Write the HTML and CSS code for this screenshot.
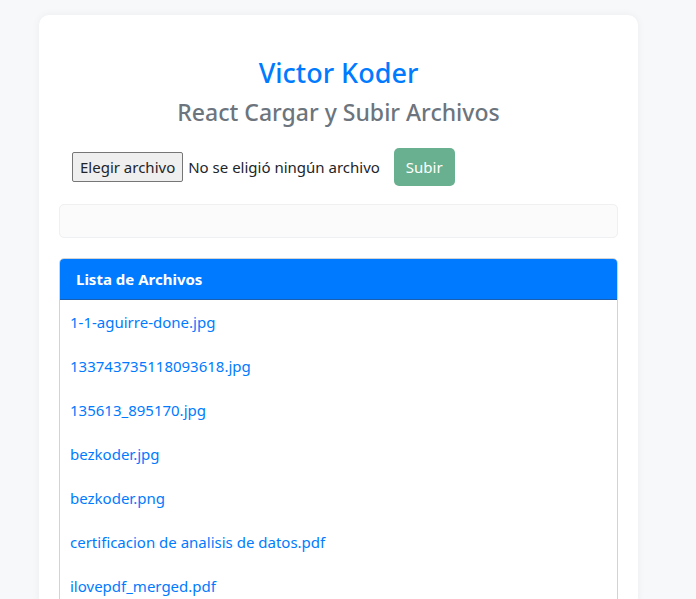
FILE: index.html
```html
<!DOCTYPE html>
<html lang="es">
<head>
<meta charset="utf-8">
<title>React Cargar y Subir Archivos</title>
<link rel="stylesheet" href="styles.css">
</head>
<body>
<div class="page">
  <div class="panel">
    <h2 class="brand">Victor Koder</h2>
    <h3 class="subtitle">React Cargar y Subir Archivos</h3>
    <div class="upload-row">
      <label class="file-picker">
        <span class="file-btn">Elegir archivo</span>
        <span class="file-name">No se eligió ningún archivo</span>
      </label>
      <button class="btn-upload" disabled>Subir</button>
    </div>
    <div class="message"></div>
    <div class="files-card">
      <div class="files-header">Lista de Archivos</div>
      <ul class="files-list">
        <li><a href="#">1-1-aguirre-done.jpg</a></li>
        <li><a href="#">133743735118093618.jpg</a></li>
        <li><a href="#">135613_895170.jpg</a></li>
        <li><a href="#">bezkoder.jpg</a></li>
        <li><a href="#">bezkoder.png</a></li>
        <li><a href="#">certificacion de analisis de datos.pdf</a></li>
        <li><a href="#">ilovepdf_merged.pdf</a></li>
      </ul>
    </div>
  </div>
</div>
</body>
</html>
```
FILE: styles.css
```css
html, body {
  margin: 0;
  padding: 0;
  background: #f7f8fa;
  font-family: "Noto Sans", "Open Sans", sans-serif;
  color: #212529;
  overflow: hidden;
}
.page {
  padding: 15px 0 0 39px;
}
.panel {
  width: 559px;
  background: #fff;
  border-radius: 10px;
  box-shadow: 0 0 8px rgba(0,0,0,0.05);
  padding: 38px 20px 20px;
  height: 700px;
}
.brand {
  margin: 0;
  text-align: center;
  color: #007bff;
  font-size: 27px;
  font-weight: 500;
  line-height: 40px;
}
.subtitle {
  margin: 0;
  text-align: center;
  color: #6c757d;
  font-size: 23px;
  font-weight: 500;
  line-height: 38px;
}
.upload-row {
  display: flex;
  align-items: center;
  margin: 17px 0 0 13px;
  gap: 14px;
}
.file-picker {
  display: flex;
  align-items: center;
  font-size: 15px;
}
.file-btn {
  border: 1px solid #767676;
  background: #efefef;
  border-radius: 2px;
  padding: 3px 7px;
  line-height: 22px;
  margin-right: 5px;
}
.btn-upload {
  font-family: inherit;
  font-size: 15px;
  color: #fff;
  background: #198754;
  opacity: 0.65;
  border: none;
  border-radius: 5px;
  padding: 0 12px;
  height: 38px;
}
.message {
  margin-top: 18px;
  height: 32px;
  border: 1px solid #eef0f2;
  background: #fbfbfb;
  border-radius: 5px;
}
.files-card {
  margin-top: 20px;
  border: 1px solid #d2d3d5;
  border-radius: 5px;
  overflow: hidden;
}
.files-header {
  background: #007bff;
  color: #fff;
  font-weight: 700;
  font-size: 15px;
  height: 40px;
  line-height: 40px;
  padding: 0 16px;
  border-bottom: 1px solid #1a5fb0;
}
.files-list {
  list-style: none;
  margin: 0;
  padding: 0;
}
.files-list li {
  height: 44px;
  line-height: 44px;
  padding: 0 10px;
  font-size: 15px;
}
.files-list a {
  color: #007bff;
  text-decoration: none;
}
```
